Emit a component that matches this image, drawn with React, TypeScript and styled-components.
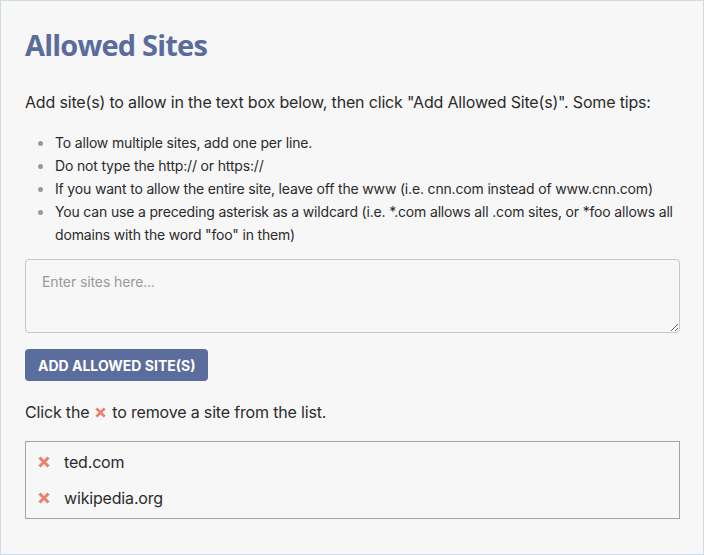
import React from "react";
import styled, { createGlobalStyle } from "styled-components";

const Global = createGlobalStyle`
  html, body { margin: 0; padding: 0; background: #f7f7f7; }
  * { box-sizing: border-box; }
`;

const Frame = styled.div`
  width: 704px;
  height: 555px;
  border: 1px solid #cfdce4;
  background: #f7f7f7;
  padding: 26px 23px 0 24px;
  font-family: Inter, "Noto Sans", sans-serif;
  color: #2b2b2b;
  letter-spacing: -0.17px;
`;

const Title = styled.h1`
  margin: 0;
  font-family: "Open Sans", sans-serif;
  font-weight: 700;
  font-size: 29px;
  line-height: 36px;
  color: #5a6c9b;
  letter-spacing: -0.8px;
`;

const Intro = styled.p`
  margin: 27px 0 0;
  font-size: 16px;
  line-height: 24px;
`;

const Tips = styled.ul`
  margin: 17px 0 0;
  padding: 0 0 0 29px;
  font-size: 14px;
  line-height: 23px;
  li::marker { color: #999; }
`;

const Tip = styled.li`
  padding-left: 1px;
`;

const SitesInput = styled.textarea`
  display: block;
  width: 100%;
  height: 74px;
  margin-top: 13px;
  padding: 12px 16px;
  border: 1px solid #c9c9c9;
  border-radius: 4px;
  background: #f7f7f7;
  font-family: Inter, "Noto Sans", sans-serif;
  font-size: 14px;
  line-height: 20px;
  letter-spacing: -0.1px;
  color: #333;
  resize: vertical;
  &::placeholder { color: #9a9a9a; }
`;

const AddButton = styled.button`
  display: block;
  margin-top: 16px;
  height: 32px;
  padding: 0 13px;
  border: none;
  border-radius: 4px;
  background: #5b6d9c;
  color: #fff;
  font-family: Inter, "Noto Sans", sans-serif;
  font-weight: 700;
  font-size: 14px;
  letter-spacing: 0;
`;

const Hint = styled.p`
  margin: 19px 0 0;
  font-size: 16px;
  line-height: 24px;
  display: flex;
  align-items: center;
  gap: 6px;
`;

const SiteList = styled.ul`
  list-style: none;
  margin: 17px 0 0;
  padding: 2px 12px 2px;
  border: 1px solid #a3a3a3;
`;

const SiteRow = styled.li`
  display: flex;
  align-items: center;
  gap: 14px;
  height: 36px;
  font-size: 16px;
`;

const RemoveIcon = ({ size = 12 }: { size?: number }) => (
  <svg width={size} height={size} viewBox="0 0 12 12" aria-hidden>
    <path d="M1.5 1.5 L10.5 10.5 M10.5 1.5 L1.5 10.5" stroke="#e8806e" strokeWidth="3" strokeLinecap="butt" />
  </svg>
);

const RemoveBtn = styled.span`
  display: inline-flex;
  width: 12px;
  height: 12px;
  cursor: pointer;
`;

const tips = [
  "To allow multiple sites, add one per line.",
  "Do not type the http:// or https://",
  "If you want to allow the entire site, leave off the www (i.e. cnn.com instead of www.cnn.com)",
  'You can use a preceding asterisk as a wildcard (i.e. *.com allows all .com sites, or *foo allows all domains with the word "foo" in them)',
];

const sites = ["ted.com", "wikipedia.org"];

export default function App() {
  return (
    <>
      <Global />
      <Frame>
        <Title>Allowed Sites</Title>
        <Intro>
          Add site(s) to allow in the text box below, then click "Add Allowed Site(s)". Some tips:
        </Intro>
        <Tips>
          {tips.map((t) => (
            <Tip key={t}>{t}</Tip>
          ))}
        </Tips>
        <SitesInput placeholder="Enter sites here..." />
        <AddButton>ADD ALLOWED SITE(S)</AddButton>
        <Hint>
          Click the <RemoveIcon size={11} /> to remove a site from the list.
        </Hint>
        <SiteList>
          {sites.map((s) => (
            <SiteRow key={s}>
              <RemoveBtn>
                <RemoveIcon />
              </RemoveBtn>
              {s}
            </SiteRow>
          ))}
        </SiteList>
      </Frame>
    </>
  );
}
